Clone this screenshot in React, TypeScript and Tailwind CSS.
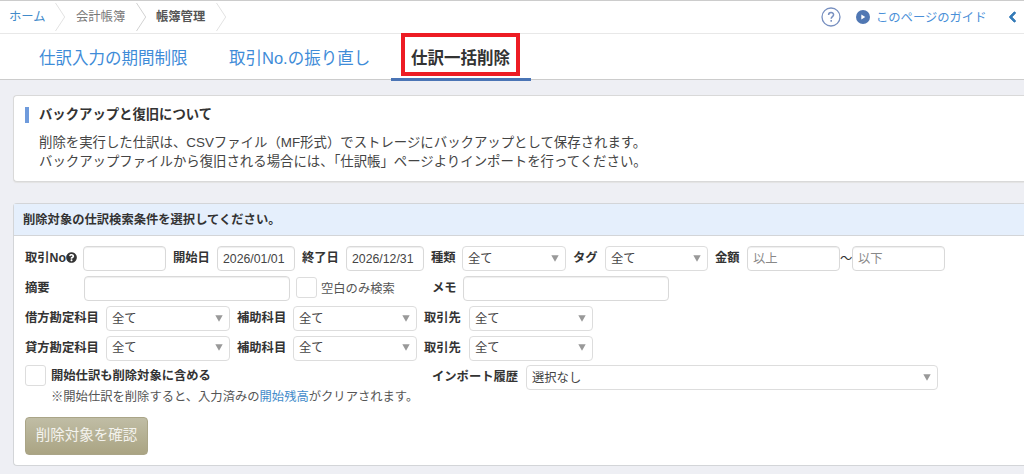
import type { ReactNode } from 'react'
import { clsx } from 'clsx'
import { FaChevronLeft, FaQuestionCircle } from 'react-icons/fa'

function Separator({ className }: { className?: string }) {
  return (
    <svg viewBox="0 0 11 28" className={clsx('w-[11px] h-7 shrink-0', className)} fill="none" stroke="currentColor">
      <path d="M.5 0 9.7 14 .5 28" />
    </svg>
  )
}

function Label({ className, children }: { className?: string; children: ReactNode }) {
  return (
    <span className={clsx('flex items-center shrink-0 h-6 pt-px font-bold whitespace-nowrap', className)}>
      {children}
    </span>
  )
}

function Input({ className, value, placeholder }: { className?: string; value?: string; placeholder?: string }) {
  return (
    <input
      type="text"
      defaultValue={value}
      placeholder={placeholder}
      className={clsx(
        'block shrink-0 h-[25px] rounded border border-[#d9d9d9] bg-white px-[5px] pt-px text-[#444] shadow-[inset_0_1px_1px_#eee] placeholder:text-[#888] outline-none',
        className,
      )}
    />
  )
}

function Select({ className, value = '全て' }: { className?: string; value?: string }) {
  return (
    <button
      type="button"
      className={clsx(
        'flex items-center justify-between shrink-0 h-[25px] rounded border border-[#ddd] bg-white pl-[5px] pr-1.5 pt-px text-[#444]',
        className,
      )}
    >
      <span>{value}</span>
      <svg viewBox="0 0 8 7" className="w-2 h-[7px] -mt-0.5 fill-[#999]">
        <path d="M.3.3h7.4L4 6.7z" />
      </svg>
    </button>
  )
}

function Checkbox() {
  return <span className="block shrink-0 w-[21px] h-[21px] rounded-[3px] border border-[#ddd] bg-white" />
}

function Header() {
  return (
    <header className="flex items-center h-[34px] pl-[9px] pr-[7px] border-t border-t-[#ccc] border-b border-b-[#e8e8e8] bg-white">
      <nav className="flex items-center">
        <a className="w-[46px] text-[#428bca]">ホーム</a>
        <Separator className="text-[#e2e2e2]" />
        <a className="w-[70px] pl-2.5 text-[#777]">会計帳簿</a>
        <Separator className="text-[#d2d2d2]" />
        <span className="w-[69px] pl-[9px] font-bold text-[#555]">帳簿管理</span>
        <Separator className="text-[#e2e2e2]" />
      </nav>
      <div className="flex items-center ml-auto text-[#4a8fd8]">
        <svg viewBox="0 0 20 20" className="w-5 h-5 mr-[15px]" fill="none" stroke="#7890c0" strokeWidth="1.3">
          <circle cx="10" cy="10" r="9" />
          <path d="M7.6 8c0-3.2 5-3.2 5-.3 0 1.9-2.4 1.9-2.4 4M10.2 12.9v1.8" strokeWidth="1.5" />
        </svg>
        <svg viewBox="0 0 14 14" className="w-3.5 h-3.5 mr-1.5">
          <circle cx="7" cy="7" r="7" fill="#5077b3" />
          <path d="M5.3 4.5v5L9.3 7z" fill="#fff" />
        </svg>
        <a className="w-[111px] pt-0.5 whitespace-nowrap">このページのガイド</a>
        <FaChevronLeft className="ml-[21px] w-[9px] h-3 text-[#337ab7] stroke-current stroke-[40]" />
      </div>
    </header>
  )
}

function Tabs() {
  return (
    <nav className="flex h-[46px] pl-[39px] border-b border-[#ccc] bg-white text-[16.5px] whitespace-nowrap text-[#3f8cd8]">
      <a className="w-[190px] leading-[49px]">仕訳入力の期間制限</a>
      <a className="w-[162px] leading-[49px]">取引No.の振り直し</a>
      <div className="w-[140px] h-[47px] pl-2.5 border-b-[3px] border-[#4a74b5]">
        <div className="w-[119px] h-[43px] -mt-px border-4 border-[#ed1c24] text-center font-bold text-[#333] leading-[43px]">
          仕訳一括削除
        </div>
      </div>
    </nav>
  )
}

function BackupNotice() {
  return (
    <section className="h-[87px] ml-[13px] mt-[15px] pl-[11px] pt-[9px] rounded-l border border-r-0 border-[#d9d9d9] bg-white shadow-[0_1px_1px_#e3e3e3] text-[13.35px]">
      <h2 className="flex items-center h-5 font-bold">
        <span className="w-1 h-4 mr-[10px] bg-[#6f9bdc]" />
        バックアップと復旧について
      </h2>
      <p className="mt-2 pl-3.5 text-[13.4px] leading-[19px] whitespace-nowrap text-[#444]">
        削除を実行した仕訳は、CSVファイル（MF形式）でストレージにバックアップとして保存されます。
        <br />
        バックアップファイルから復旧される場合には、「仕訳帳」ページよりインポートを行ってください。
      </p>
    </section>
  )
}

function SearchForm() {
  return (
    <section className="h-[263px] ml-[13px] mt-[21px] rounded-l border border-r-0 border-[#d3d5d8] bg-white">
      <h2 className="h-8 pl-[9px] border-b border-[#d3d5d8] bg-[#e5effc] font-bold leading-[33px]">
        削除対象の仕訳検索条件を選択してください。
      </h2>
      <div className="pl-[11px] pt-[9px]">
        <div className="flex h-[30px] pt-px">
          <Label className="w-[58px]">
            取引No
            <FaQuestionCircle className="shrink-0 w-[11px] h-[11px] mb-0.5" />
          </Label>
          <Input className="w-[83px]" />
          <Label className="w-[51px] pl-[7px]">開始日</Label>
          <Input className="w-[78px]" value="2026/01/01" />
          <Label className="w-[51px] pl-[7px]">終了日</Label>
          <Input className="w-[78px]" value="2026/12/31" />
          <Label className="w-[38px] pl-[7px]">種類</Label>
          <Select className="w-[104px]" />
          <Label className="w-[39px] pl-[7px]">タグ</Label>
          <Select className="w-[103px]" />
          <Label className="w-[39px] pl-[7px]">金額</Label>
          <Input className="w-[93px]" placeholder="以上" />
          <span className="w-3 leading-[27px]">～</span>
          <Input className="w-[93px]" placeholder="以下" />
        </div>

        <div className="flex h-[30px] pt-px">
          <Label className="w-[59px]">摘要</Label>
          <Input className="w-[206px]" />
          <label className="flex w-[142px] pl-1.5 gap-1 pt-px">
            <Checkbox />
            <span className="leading-6 text-[#555]">空白のみ検索</span>
          </label>
          <Label className="w-[31px]">メモ</Label>
          <Input className="w-[206px]" />
        </div>

        {['借方勘定科目', '貸方勘定科目'].map((name) => (
          <div key={name} className="flex h-[29.5px] pt-px">
            <Label className="w-[81px]">{name}</Label>
            <Select className="w-[124px]" />
            <Label className="w-[63px] pl-[7px]">補助科目</Label>
            <Select className="w-[124px]" />
            <Label className="w-[52px] pl-[7px]">取引先</Label>
            <Select className="w-[124px]" />
          </div>
        ))}

        <div className="flex h-[23px] pt-px">
          <label className="flex w-[407px] gap-[5px]">
            <Checkbox />
            <span className="font-bold leading-[23px]">開始仕訳も削除対象に含める</span>
          </label>
          <Label className="w-[94px]">インポート履歴</Label>
          <Select className="w-[412px]" value="選択なし" />
        </div>

        <p className="pl-[26px] pt-px leading-[18px] text-[#555]">
          ※開始仕訳を削除すると、入力済みの<a className="text-[#428bca]">開始残高</a>がクリアされます。
        </p>

        <button
          type="button"
          className="block w-[123px] h-[38px] mt-[11px] rounded border border-[#aaa587] bg-linear-to-b from-[#c0bda5] to-[#aaa483] text-[14.5px] text-[#f4f3ee]"
        >
          削除対象を確認
        </button>
      </div>
    </section>
  )
}

export default function App() {
  return (
    <div className="w-[1024px] h-[474px] overflow-hidden bg-[#eeeff4] font-['Liberation_Sans','Noto_Sans_CJK_JP',sans-serif] text-[12.3px] text-[#333]">
      <Header />
      <Tabs />
      <BackupNotice />
      <SearchForm />
    </div>
  )
}
